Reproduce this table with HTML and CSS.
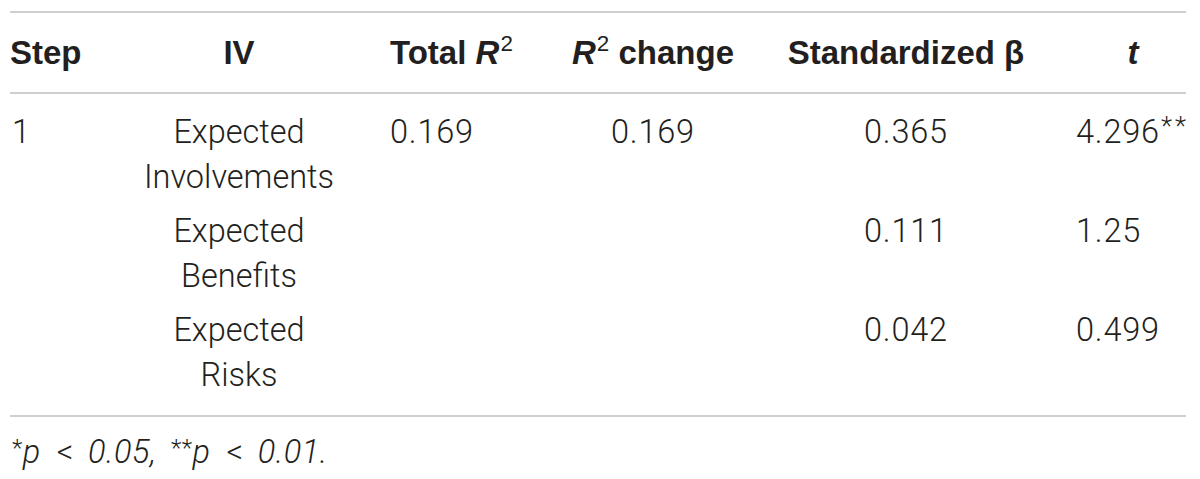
FILE: index.html
```html
<!DOCTYPE html>
<html>
<head>
<meta charset="utf-8">
<link rel="stylesheet" href="styles.css">
</head>
<body>
<div class="wrap">
  <table class="stats">
    <colgroup>
      <col class="c-step"><col class="c-iv"><col class="c-total"><col class="c-change"><col class="c-beta"><col class="c-t">
    </colgroup>
    <thead>
      <tr>
        <th class="left">Step</th>
        <th class="center">IV</th>
        <th class="left pad-total">Total <i>R</i><sup>2</sup></th>
        <th class="center"><i>R</i><sup>2</sup> change</th>
        <th class="center">Standardized β</th>
        <th class="center pad-t"><i>t</i></th>
      </tr>
    </thead>
    <tbody>
      <tr>
        <td class="left num">1</td>
        <td class="center">Expected<br>Involvements</td>
        <td class="left pad-total num">0.169</td>
        <td class="center num">0.169</td>
        <td class="center num">0.365</td>
        <td class="left pad-t num">4.296<span class="star">**</span></td>
      </tr>
      <tr>
        <td class="left"></td>
        <td class="center">Expected<br>Benefits</td>
        <td class="left pad-total"></td>
        <td class="center"></td>
        <td class="center num">0.111</td>
        <td class="left pad-t num">1.25</td>
      </tr>
      <tr>
        <td class="left"></td>
        <td class="center">Expected<br>Risks</td>
        <td class="left pad-total"></td>
        <td class="center"></td>
        <td class="center num">0.042</td>
        <td class="left pad-t num">0.499</td>
      </tr>
    </tbody>
  </table>
  <p class="note"><span class="sup">*</span>p<span class="op">&lt;</span>0.05, <span class="sup">**</span>p<span class="op">&lt;</span>0.01.</p>
</div>
</body>
</html>
```
FILE: styles.css
```css
html, body {
  margin: 0;
  padding: 0;
  background: #ffffff;
}
body {
  color: #231f20;
  font-family: Roboto, "Liberation Sans", sans-serif;
}
.wrap {
  padding: 11px 14px 0 10px;
}
.stats {
  width: 1176px;
  border-collapse: collapse;
  table-layout: fixed;
  border-top: 2px solid #cfcfcf;
  border-bottom: 2px solid #cfcfcf;
}
.c-step { width: 120px; }
.c-iv { width: 218px; }
.c-total { width: 212px; }
.c-change { width: 186px; }
.c-beta { width: 320px; }
.c-t { width: 120px; }

thead tr {
  border-bottom: 2px solid #cfcfcf;
}
th {
  font-family: "Liberation Sans", Arial, sans-serif;
  font-weight: 700;
  font-size: 33px;
  height: 79px;
  padding: 0;
  vertical-align: middle;
  color: #231f20;
}
th i {
  font-style: italic;
}
th sup {
  font-size: 0.68em;
  font-weight: 400;
  line-height: 0;
  vertical-align: 0.55em;
  margin-left: 1px;
}
td {
  font-size: 32.5px;
  font-weight: 300;
  line-height: 45px;
  padding: 4px 0 5px;
  vertical-align: top;
}
td.num {
  letter-spacing: 0.8px;
}
tbody tr:first-child td {
  padding-top: 16px;
}
tbody tr:last-child td {
  padding-bottom: 17px;
}
.left { text-align: left; }
.center { text-align: center; }
.pad-total { padding-left: 42px; }
td.pad-t { padding-left: 10px; }
th.pad-t { padding-left: 14px; }
td.left:first-child { padding-left: 2px; }
.star {
  font-size: 0.8em;
  vertical-align: 0.3em;
  line-height: 0;
  letter-spacing: 3px;
  margin-left: 1px;
}
.note {
  margin: 17px 0 0 2px;
  font-size: 32.5px;
  font-style: italic;
  font-weight: 300;
  line-height: 36px;
  word-spacing: 6px;
  letter-spacing: 0.5px;
}
.note .op {
  margin: 0 14px 0 16px;
  font-style: normal;
}
.note .sup {
  font-style: normal;
  font-size: 0.75em;
  vertical-align: 0.3em;
  line-height: 0;
}
```
